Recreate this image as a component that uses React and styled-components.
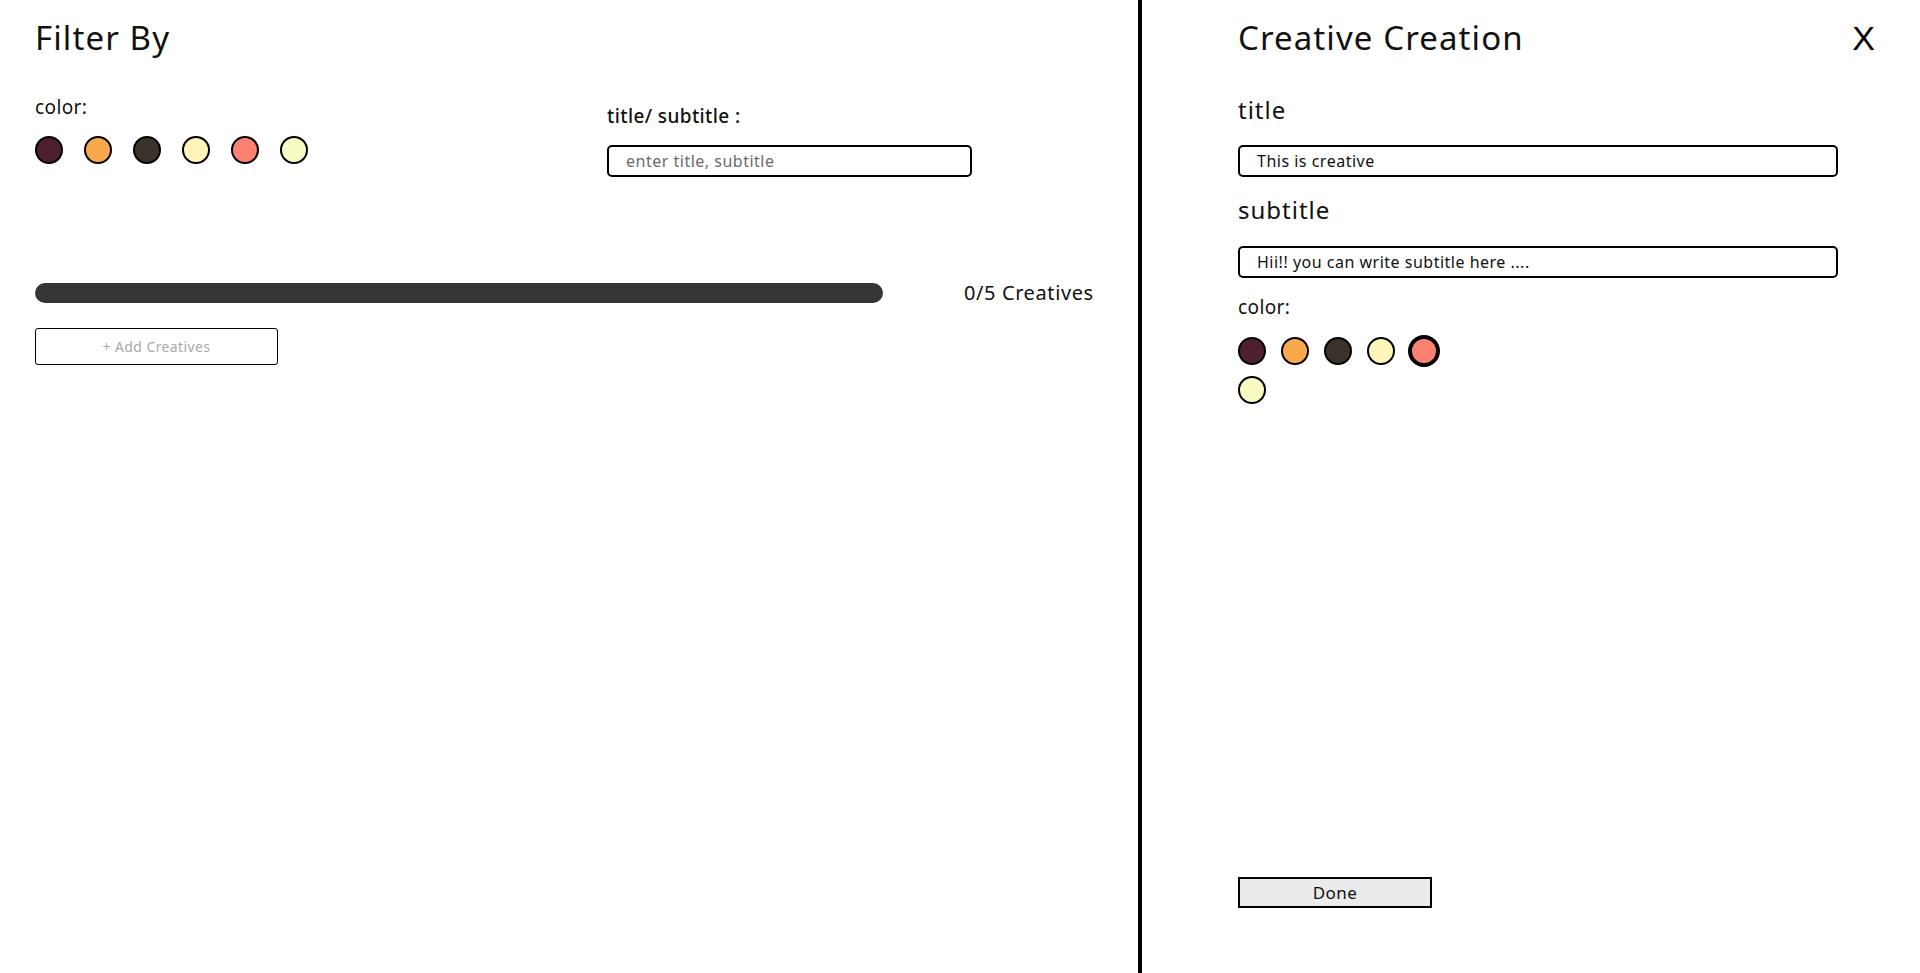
import React from 'react';
import styled, { createGlobalStyle } from 'styled-components';

const GlobalStyle = createGlobalStyle`
  html, body {
    margin: 0;
    padding: 0;
    background: #fff;
  }
  body {
    font-family: 'Noto Sans', 'DejaVu Sans', sans-serif;
    color: #111;
  }
  * {
    box-sizing: border-box;
  }
`;

const COLORS = ['#4d1f31', '#f9a94b', '#39332c', '#fff4b9', '#fb8171', '#f8fac2'];

const Layout = styled.div`
  display: flex;
  width: 100%;
  height: 973px;
`;

const FilterPanel = styled.section`
  width: 1142px;
  padding: 0 35px;
  border-right: 4px solid #000;
`;

const CreatePanel = styled.section`
  flex: 1;
  padding: 0 45px 0 96px;
  display: flex;
  flex-direction: column;
`;

const Heading = styled.h1`
  margin: 16px 0 0;
  font-size: 33px;
  font-weight: 400;
  line-height: 44px;
  letter-spacing: 1.1px;
`;

const FilterRow = styled.div`
  display: flex;
  margin-top: 35px;
`;

const ColorGroup = styled.div`
  width: 572px;
`;

const SearchGroup = styled.div`
  padding-top: 9px;
`;

const SmallLabel = styled.div`
  margin-top: ${(p) => p.top || 0}px;
  font-size: 19px;
  line-height: 24px;
  letter-spacing: 0.4px;
  font-weight: ${(p) => (p.bold ? 500 : 400)};
`;

const Swatches = styled.div`
  display: flex;
  flex-wrap: wrap;
  align-items: center;
  gap: ${(p) => p.rowGap}px ${(p) => p.gap}px;
  width: ${(p) => p.width || 'auto'};
  margin-top: ${(p) => p.top}px;
`;

const Swatch = styled.span`
  display: block;
  width: ${(p) => (p.selected ? 32 : 28)}px;
  height: ${(p) => (p.selected ? 32 : 28)}px;
  margin: ${(p) => (p.selected ? -2 : 0)}px;
  border-radius: 50%;
  background: ${(p) => p.color};
  border: ${(p) => (p.selected ? 4 : 2)}px solid #000;
`;

const TextBox = styled.div`
  display: flex;
  align-items: center;
  width: ${(p) => p.width}px;
  height: 32px;
  margin-top: ${(p) => p.top}px;
  padding-left: 17px;
  border: 2px solid #000;
  border-radius: 5px;
  font-size: 16px;
  letter-spacing: 0.5px;
  color: ${(p) => (p.placeholder ? '#6b6b6b' : '#111')};
`;

const ProgressRow = styled.div`
  display: flex;
  align-items: center;
  margin-top: 102px;
`;

const Track = styled.div`
  width: 848px;
  height: 20px;
  border-radius: 10px;
  background: #363636;
`;

const Count = styled.span`
  margin-left: 81px;
  font-size: 20px;
  letter-spacing: 0.6px;
`;

const AddButton = styled.button`
  display: block;
  width: 243px;
  height: 37px;
  margin-top: 22px;
  border: 1px solid #000;
  border-radius: 3px;
  background: #fff;
  font-family: inherit;
  font-size: 14px;
  letter-spacing: 0.4px;
  color: #a9a9a9;
`;

const TopBar = styled.div`
  display: flex;
  justify-content: space-between;
  align-items: center;
`;

const Close = styled.button`
  border: none;
  background: none;
  padding: 0;
  margin-top: 16px;
  font-family: 'Liberation Sans', Arial, sans-serif;
  font-size: 34px;
  line-height: 44px;
  color: #000;
`;

const FieldLabel = styled.div`
  margin-top: ${(p) => p.top}px;
  font-size: 24px;
  line-height: 30px;
  letter-spacing: 1px;
`;

const Spacer = styled.div`
  flex: 1;
`;

const DoneButton = styled.button`
  width: 194px;
  height: 31px;
  margin-bottom: 65px;
  border: 2px solid #000;
  background: #ebebeb;
  font-family: inherit;
  font-size: 17px;
  letter-spacing: 0.4px;
  color: #111;
`;

export default function App() {
  return (
    <>
      <GlobalStyle />
      <Layout>
        <FilterPanel>
          <Heading>Filter By</Heading>
          <FilterRow>
            <ColorGroup>
              <SmallLabel>color:</SmallLabel>
              <Swatches gap={21} rowGap={10} top={17}>
                {COLORS.map((c) => (
                  <Swatch key={c} color={c} />
                ))}
              </Swatches>
            </ColorGroup>
            <SearchGroup>
              <SmallLabel bold>title/ subtitle :</SmallLabel>
              <TextBox width={365} top={17} placeholder>
                enter title, subtitle
              </TextBox>
            </SearchGroup>
          </FilterRow>
          <ProgressRow>
            <Track />
            <Count>0/5 Creatives</Count>
          </ProgressRow>
          <AddButton>+ Add Creatives</AddButton>
        </FilterPanel>

        <CreatePanel>
          <TopBar>
            <Heading>Creative Creation</Heading>
            <Close>X</Close>
          </TopBar>
          <FieldLabel top={35}>title</FieldLabel>
          <TextBox width={600} top={20}>
            This is creative
          </TextBox>
          <FieldLabel top={18}>subtitle</FieldLabel>
          <TextBox width={600} top={21}>
            Hii!! you can write subtitle here ....
          </TextBox>
          <SmallLabel top={17}>color:</SmallLabel>
          <Swatches gap={15} rowGap={11} top={18} width="220px">
            {COLORS.map((c, i) => (
              <Swatch key={c} color={c} selected={i === 4} />
            ))}
          </Swatches>
          <Spacer />
          <DoneButton>Done</DoneButton>
        </CreatePanel>
      </Layout>
    </>
  );
}
